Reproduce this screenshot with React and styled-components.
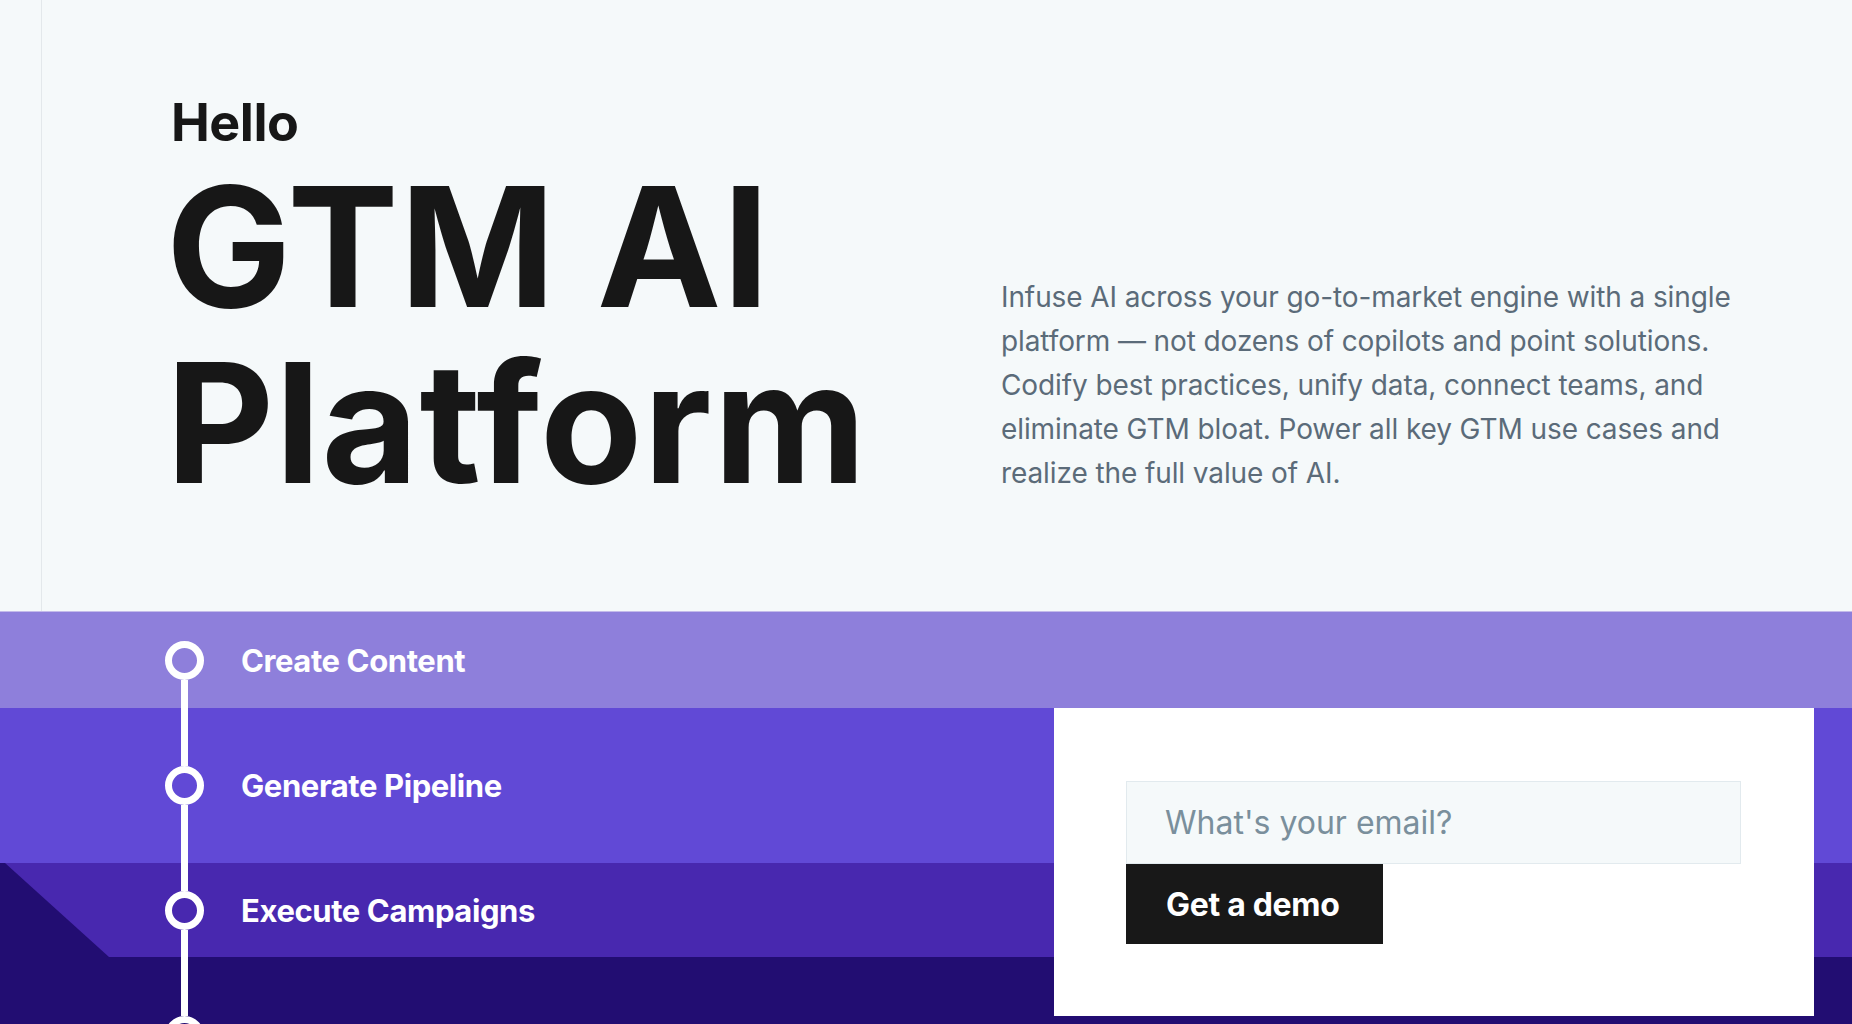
import React from 'react'
import styled, { createGlobalStyle } from 'styled-components'

const GlobalStyle = createGlobalStyle`
    * { box-sizing: border-box; }
    html, body {
        margin: 0;
        padding: 0;
        background: #f5f9fa;
        font-family: Inter, "Noto Sans", "Liberation Sans", sans-serif;
        overflow: hidden;
    }
`;

const steps = [
    { id: 1, label: 'Create Content', tone: 'light' },
    { id: 2, label: 'Generate Pipeline', tone: 'mid' },
    { id: 3, label: 'Execute Campaigns', tone: 'deep' },
    { id: 4, label: 'Close Deals', tone: 'dark' },
];

const bandColors = {
    light: '#8e7fdb',
    mid: '#6149d6',
    deep: '#4828af',
    dark: '#220d72',
};

const bandHeights = {
    light: '96px',
    mid: '155px',
    deep: '94px',
    dark: '156px',
};

function App() {
    return (
        <Page>
            <GlobalStyle />
            <Hero>
                <HeroInner>
                    <Headline>
                        <Greeting>Hello</Greeting>
                        <Title>GTM AI<br />Platform</Title>
                    </Headline>
                    <Intro>
                        Infuse AI across your go-to-market engine with a single platform — not
                        dozens of copilots and point solutions. Codify best practices, unify data,
                        connect teams, and eliminate GTM bloat. Power all key GTM use cases and
                        realize the full value of AI.
                    </Intro>
                </HeroInner>
            </Hero>
            <Steps>
                {steps.map((s, i) => (
                    <Band key={s.id} $tone={s.tone} $row={i + 1}>
                        <Marker>
                            <Track $blank={i === 0} />
                            <Ring />
                            <Track />
                        </Marker>
                        <StepLabel>{s.label}</StepLabel>
                    </Band>
                ))}
                <DemoCard>
                    <EmailInput placeholder="What's your email?" />
                    <DemoButton>Get a demo</DemoButton>
                </DemoCard>
            </Steps>
        </Page>
    )
}

const Page = styled.div`
    width: 100%;
    height: 100vh;
    overflow: hidden;
    background: #220d72;
`;

const Hero = styled.section`
    background: #f5f9fa;
    padding-left: 41px;
    border-bottom: 1px solid #c4bbea;
`;

const HeroInner = styled.div`
    border-left: 1px solid #e3e8eb;
    height: 611px;
    padding: 93px 0 0 129px;
    display: flex;
    align-items: flex-start;
`;

const Headline = styled.div`
    width: 830px;
    flex-shrink: 0;
`;

const Greeting = styled.div`
    font-size: 52px;
    line-height: 60px;
    font-weight: 700;
    color: #171717;
    letter-spacing: -0.5px;
    margin-bottom: 5px;
`;

const Title = styled.h1`
    margin: 0 0 0 -5px;
    font-size: 167px;
    line-height: 176px;
    font-weight: 700;
    color: #171717;
    letter-spacing: 1px;
`;

const Intro = styled.p`
    margin: 182px 0 0 0;
    width: 750px;
    font-size: 28px;
    line-height: 44px;
    color: #5b6b79;
    font-weight: 400;
    letter-spacing: -0.1px;
`;

const Steps = styled.section`
    display: grid;
    grid-template-columns: 1054px 760px 1fr;
    grid-template-rows: ${bandHeights.light} ${bandHeights.mid} ${bandHeights.deep} ${bandHeights.dark};
    background: #220d72;
`;

const Band = styled.div`
    grid-column: 1 / -1;
    grid-row: ${p => p.$row};
    background: ${p => bandColors[p.$tone]};
    display: flex;
    align-items: stretch;
    gap: 37px;
    padding-left: 164px;
    ${p => p.$tone === 'deep' && 'clip-path: polygon(5px 0, 100% 0, 100% 100%, 109px 100%);'}
`;

const Marker = styled.div`
    width: 40px;
    display: flex;
    flex-direction: column;
    align-items: center;
`;

const Track = styled.div`
    flex: 1;
    width: 7px;
    background: ${p => (p.$blank ? 'transparent' : '#ffffff')};
`;

const Ring = styled.div`
    width: 39px;
    height: 39px;
    border-radius: 50%;
    border: 7px solid #ffffff;
    flex-shrink: 0;
`;

const StepLabel = styled.div`
    align-self: center;
    font-size: 31px;
    font-weight: 700;
    color: #ffffff;
    letter-spacing: -0.4px;
`;

const DemoCard = styled.div`
    grid-column: 2;
    grid-row: 2 / span 3;
    align-self: start;
    z-index: 1;
    background: #ffffff;
    padding: 73px 73px 72px 72px;
    display: flex;
    flex-direction: column;
    align-items: flex-start;
`;

const EmailInput = styled.input`
    width: 100%;
    height: 83px;
    border: 1px solid #e2eaee;
    background: #f5f9fa;
    padding: 0 38px;
    font-family: Inter, "Noto Sans", "Liberation Sans", sans-serif;
    font-size: 32px;
    color: #171717;
    outline: none;
    &::placeholder {
        color: #7a8f9c;
    }
`;

const DemoButton = styled.button`
    height: 80px;
    width: 257px;
    padding: 0 0 0 40px;
    text-align: left;
    border: none;
    background: #181818;
    color: #ffffff;
    font-family: Inter, "Noto Sans", "Liberation Sans", sans-serif;
    font-size: 32px;
    font-weight: 700;
    letter-spacing: -0.3px;
    cursor: pointer;
`;

export default App;
